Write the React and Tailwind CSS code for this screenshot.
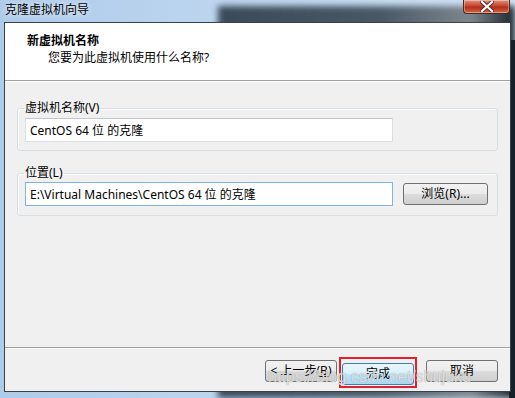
import { useState } from 'react'

const ui = { fontFamily: '"Noto Sans", "Noto Sans CJK SC", sans-serif' }

function Button({ children, primary, className = '' }) {
  return (
    <button
      className={`h-[22px] w-[72px] rounded-[3px] border text-[12px] leading-none text-black ${
        primary
          ? 'border-[#3c7fb1] bg-[linear-gradient(#eaf6fd_0%,#d9f0fc_50%,#bee6fd_50%,#a7d9f5_100%)]'
          : 'border-[#707070] bg-[linear-gradient(#f2f2f2_0%,#ebebeb_50%,#dddddd_50%,#cfcfcf_100%)]'
      } ${className}`}
      style={ui}
    >
      {children}
    </button>
  )
}

function Group({ label, children }) {
  return (
    <fieldset className="rounded-[3px] border border-[#d5dfe5] px-[7px] shadow-[inset_1px_1px_0_#fff]">
      <legend className="ml-[-1px] px-[1px] text-[12px] leading-[16px] text-black" style={ui}>
        {label}
      </legend>
      {children}
    </fieldset>
  )
}

export default function App() {
  const [name, setName] = useState('CentOS 64 位 的克隆')
  const [path, setPath] = useState('E:\\Virtual Machines\\CentOS 64 位 的克隆')

  return (
    <div className="relative h-[398px] w-[515px] overflow-hidden bg-[linear-gradient(90deg,#aecbea,#c3d9f1_60%,#d2e3f5)]" style={ui}>
      {/* desktop seen through the glass frame */}
      <div className="absolute left-[218px] top-[6px] right-0 bottom-0 bg-[linear-gradient(90deg,#3a4a58,#4a5866_55%,#7c868e_85%,#1b252c)] blur-[3px]" />
      <div className="absolute right-0 top-[40px] bottom-0 w-[6px] bg-[#152028]" />

      <div className="relative flex h-full flex-col">
        {/* title bar */}
        <div className="flex h-[22px] items-start justify-between pl-[5px]">
          <span className="pt-[2px] text-[12px] leading-[16px] text-black [text-shadow:0_0_6px_#fff]">克隆虚拟机向导</span>
          <div className="mr-[5px] flex h-[14px] w-[47px] items-center justify-center rounded-b-[4px] border border-t-0 border-[#4b2a24] bg-[linear-gradient(#e1937e,#c5452f_45%,#b22d18_55%,#cf6a45)] shadow-[inset_0_0_0_1px_rgba(255,255,255,0.35)]">
            <svg width="14" height="11" viewBox="0 0 14 11">
              <path d="M2 1 L12 10 M12 1 L2 10" stroke="#5a2a20" strokeWidth="4" strokeLinecap="square" />
              <path d="M2 1 L12 10 M12 1 L2 10" stroke="#fff" strokeWidth="2.2" strokeLinecap="square" />
            </svg>
          </div>
        </div>

        {/* client */}
        <div className="mx-[4px] flex h-[370px] w-[507px] flex-col border border-[#3a4148] bg-[#f0f0f0]">
          <div className="h-[58px] border-b border-[#a0a0a0] bg-white">
            <div className="pl-[22px] pt-[10px] text-[12px] font-bold leading-[16px] text-black">新虚拟机名称</div>
            <div className="pl-[43px] pt-[1px] text-[12px] leading-[16px] text-black">您要为此虚拟机使用什么名称?</div>
          </div>
          <div className="h-px bg-white" />

          <div className="flex flex-1 flex-col px-[12px] pt-[18px]">
            <Group label="虚拟机名称(V)">
              <input
                value={name}
                onChange={(e) => setName(e.target.value)}
                className="mt-[2px] mb-[8px] h-[24px] w-[368px] border border-[#dadfe4] border-t-[#c2c6cb] bg-white px-[4px] text-[12px] text-black outline-none"
                style={ui}
              />
            </Group>

            <div className="h-[14px]" />

            <Group label="位置(L)">
              <div className="mt-[1px] mb-[9px] flex items-center">
                <input
                  value={path}
                  onChange={(e) => setPath(e.target.value)}
                  className="h-[24px] w-[368px] border border-[#7eb4ea] bg-white px-[4px] text-[12px] text-black outline-none"
                  style={ui}
                />
                <Button className="ml-[10px] w-[85px]">浏览(R)...</Button>
              </div>
            </Group>

            <div className="flex-1" />
          </div>

          <div className="h-px bg-[#a0a0a0]" />
          <div className="h-px bg-white" />
          <div className="flex h-[42px] items-start justify-end pr-[12px] pt-[11px]">
            <Button>&lt; 上一步(<u>B</u>)</Button>
            <div className="relative ml-[5px]">
              <Button primary>完成</Button>
              <div className="pointer-events-none absolute -inset-[3px] border-2 border-[#e3202c]" />
            </div>
            <Button className="ml-[12px]">取消</Button>
          </div>
        </div>
      </div>

      {/* watermark */}
      <div
        className="pointer-events-none absolute left-[268px] top-[368px] text-[16px] leading-[18px] text-white/70 [text-shadow:0_0_1px_#888]"
        style={{ fontFamily: '"Liberation Sans", Arial, sans-serif' }}
      >
        https://blog.csdn.net/shujuku
      </div>
    </div>
  )
}
